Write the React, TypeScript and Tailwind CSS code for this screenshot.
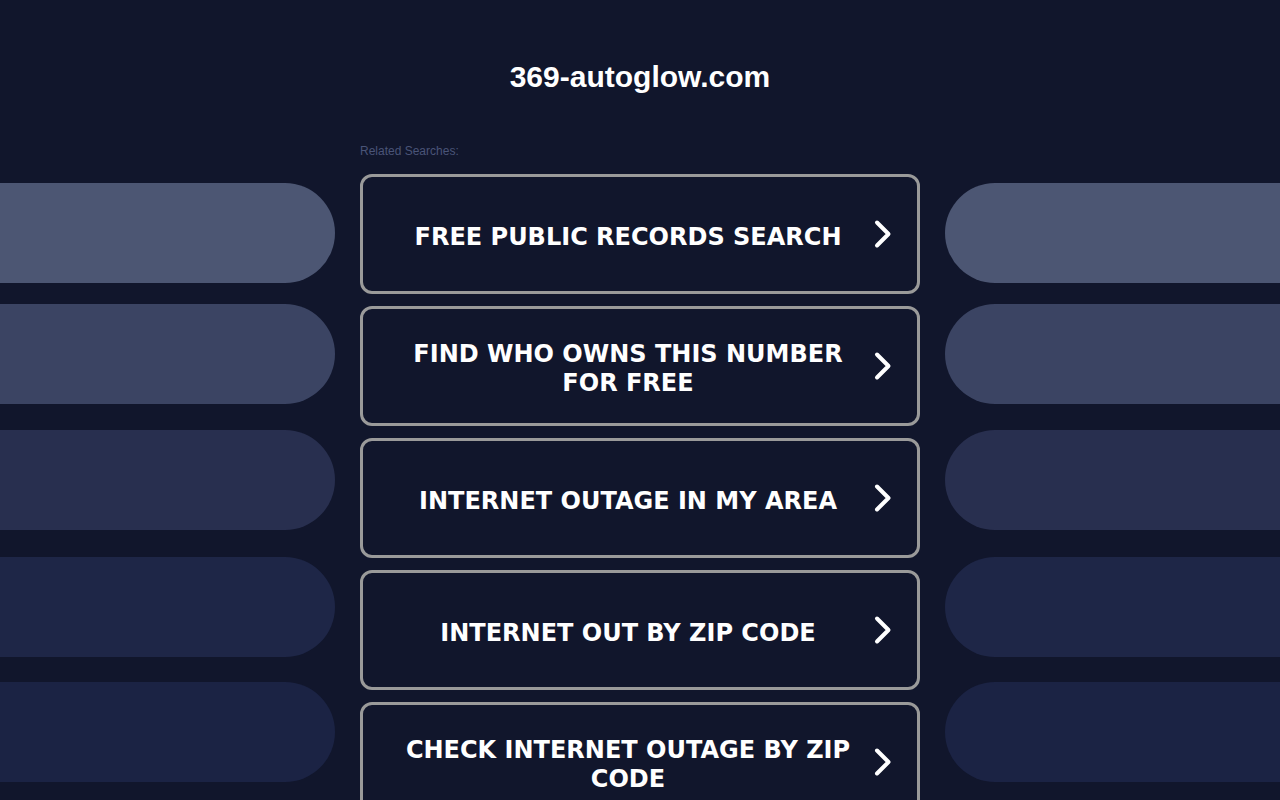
const SEARCHES = [
  'FREE PUBLIC RECORDS SEARCH',
  'FIND WHO OWNS THIS NUMBER FOR FREE',
  'INTERNET OUTAGE IN MY AREA',
  'INTERNET OUT BY ZIP CODE',
  'CHECK INTERNET OUTAGE BY ZIP CODE',
];

// decorative side pills, top to bottom
const PILLS = [
  { color: 'bg-[#4c5673]', gap: 'mt-0' },
  { color: 'bg-[#3b4463]', gap: 'mt-[21px]' },
  { color: 'bg-[#282f4f]', gap: 'mt-[26px]' },
  { color: 'bg-[#1e2647]', gap: 'mt-[27px]' },
  { color: 'bg-[#1b2344]', gap: 'mt-[25px]' },
];

function Pills({ side }: { side: 'left' | 'right' }) {
  return (
    <div className="flex flex-col pt-[88px]">
      {PILLS.map((p, i) => (
        <div
          key={i}
          className={`h-[100px] ${p.color} ${p.gap} ${
            side === 'left' ? 'rounded-r-[50px]' : 'rounded-l-[50px]'
          }`}
        />
      ))}
    </div>
  );
}

function Chevron() {
  return (
    <svg width="22" height="30" viewBox="0 0 22 30" className="shrink-0" aria-hidden="true">
      <path
        d="M4 3.5 L15.5 15 L4 26.5"
        fill="none"
        stroke="#ffffff"
        strokeWidth="4"
        strokeLinecap="round"
        strokeLinejoin="round"
      />
    </svg>
  );
}

export default function App() {
  return (
    <div className="min-h-screen w-full overflow-hidden bg-[#11162c]">
      <h1 className="pt-[59px] text-center text-[30px] leading-[36px] font-bold text-white font-['Liberation_Sans',Arial,sans-serif]">
        369-autoglow.com
      </h1>

      <div className="grid grid-cols-[335px_560px_335px] gap-x-[25px]">
        <Pills side="left" />

        <div className="flex flex-col">
          <div className="mt-[49px] mb-[16px] text-[12px] leading-[14px] text-[#4a5478] font-['Liberation_Sans',Arial,sans-serif]">
            Related Searches:
          </div>
          <div className="flex flex-col gap-[12px]">
            {SEARCHES.map((s) => (
              <a
                key={s}
                href="#"
                className="flex h-[120px] items-center rounded-[12px] border-[3px] border-[#9a9a9a] pl-[20px] pr-[22px]"
              >
                <span className="flex-1 pt-[6px] text-center text-[24px] leading-[29px] font-bold text-white font-['DejaVu_Sans',Verdana,sans-serif]">
                  {s}
                </span>
                <Chevron />
              </a>
            ))}
          </div>
        </div>

        <Pills side="right" />
      </div>
    </div>
  );
}
